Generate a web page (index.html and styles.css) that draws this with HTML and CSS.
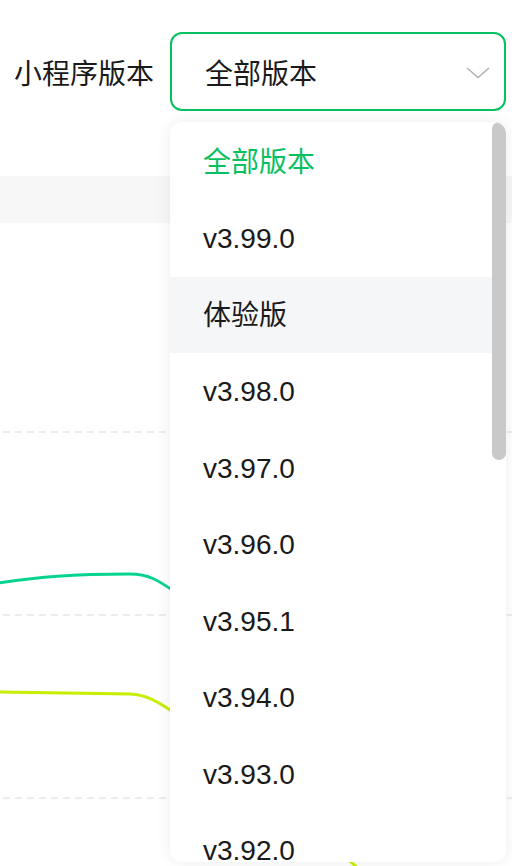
FILE: index.html
```html
<!DOCTYPE html>
<html>
<head>
    <meta charset="utf-8">
    <title>小程序版本</title>
    <link rel="stylesheet" href="styles.css">
</head>
<body>

<div class="filter">
    <span class="filter-label">小程序版本</span>
    <div class="select">
        <span class="select-value">全部版本</span>
        <svg class="select-arrow" width="24" height="12" viewBox="0 0 24 12">
            <path d="M1 1 L12 10.5 L23 1" fill="none" stroke="#b2b2b2" stroke-width="1.6"/>
        </svg>
    </div>
</div>

<div class="table-head"></div>

<div class="chart">
    <svg width="512" height="643" viewBox="0 223 512 643">
        <line class="grid" x1="3" y1="432" x2="512" y2="432"/>
        <line class="grid" x1="3" y1="615" x2="512" y2="615"/>
        <line class="grid" x1="3" y1="798" x2="512" y2="798"/>
        <path d="M-2 583 C 40 577, 70 574, 130 574 C 148 574, 158 580, 175 592 L 300 680" fill="none" stroke="#06d48e" stroke-width="3"/>
        <path d="M-2 692 L 130 694 C 148 695, 158 702, 175 713 L 358 868" fill="none" stroke="#c8ee00" stroke-width="3"/>
    </svg>
</div>

<div class="dropdown">
    <ul class="options">
        <li class="option selected">全部版本</li>
        <li class="option">v3.99.0</li>
        <li class="option hover">体验版</li>
        <li class="option">v3.98.0</li>
        <li class="option">v3.97.0</li>
        <li class="option">v3.96.0</li>
        <li class="option">v3.95.1</li>
        <li class="option">v3.94.0</li>
        <li class="option">v3.93.0</li>
        <li class="option">v3.92.0</li>
    </ul>
    <div class="scrollbar"></div>
</div>

</body>
</html>
```

FILE: styles.css
```css
body {
    margin: 0;
    background-color: #fff;
    font-family: "Liberation Sans", "Noto Sans CJK SC", sans-serif;
    color: #1a1a1a;
    overflow: hidden;
}

.filter {
    display: flex;
    align-items: center;
    padding: 32px 6px 0 14px;
    height: 79px;
}

.filter-label {
    font-size: 28px;
    margin-right: 16px;
}

.select {
    box-sizing: border-box;
    width: 336px;
    height: 79px;
    border: 2px solid #07c160;
    border-radius: 12px;
    display: flex;
    align-items: center;
    justify-content: space-between;
    padding: 0 14px 0 33px;
}

.select-value {
    font-size: 28px;
}

.select-arrow {
    display: block;
    margin-top: 2px;
}

.table-head {
    margin-top: 65px;
    height: 47px;
    background-color: #f7f7f7;
}

.chart svg {
    display: block;
}

.grid {
    stroke: #e6e6e6;
    stroke-width: 1.5;
    stroke-dasharray: 7 5;
}

.dropdown {
    position: absolute;
    left: 170px;
    top: 122px;
    width: 336px;
    height: 740px;
    background-color: #fff;
    border-radius: 12px;
    box-shadow: 0 0 16px rgba(0, 0, 0, 0.08);
    overflow: hidden;
}

.options {
    list-style: none;
    margin: 0;
    padding: 1.5px 0 0 0;
}

.option {
    height: 76.5px;
    line-height: 78px;
    padding-left: 33px;
    font-size: 28px;
}

.option.selected {
    color: #07c160;
}

.option.hover {
    background-color: #f5f6f8;
}

.scrollbar {
    position: absolute;
    right: 0;
    top: 0;
    width: 14px;
    height: 338px;
    border-radius: 7px;
    background-color: #c9c9c9;
}
```
